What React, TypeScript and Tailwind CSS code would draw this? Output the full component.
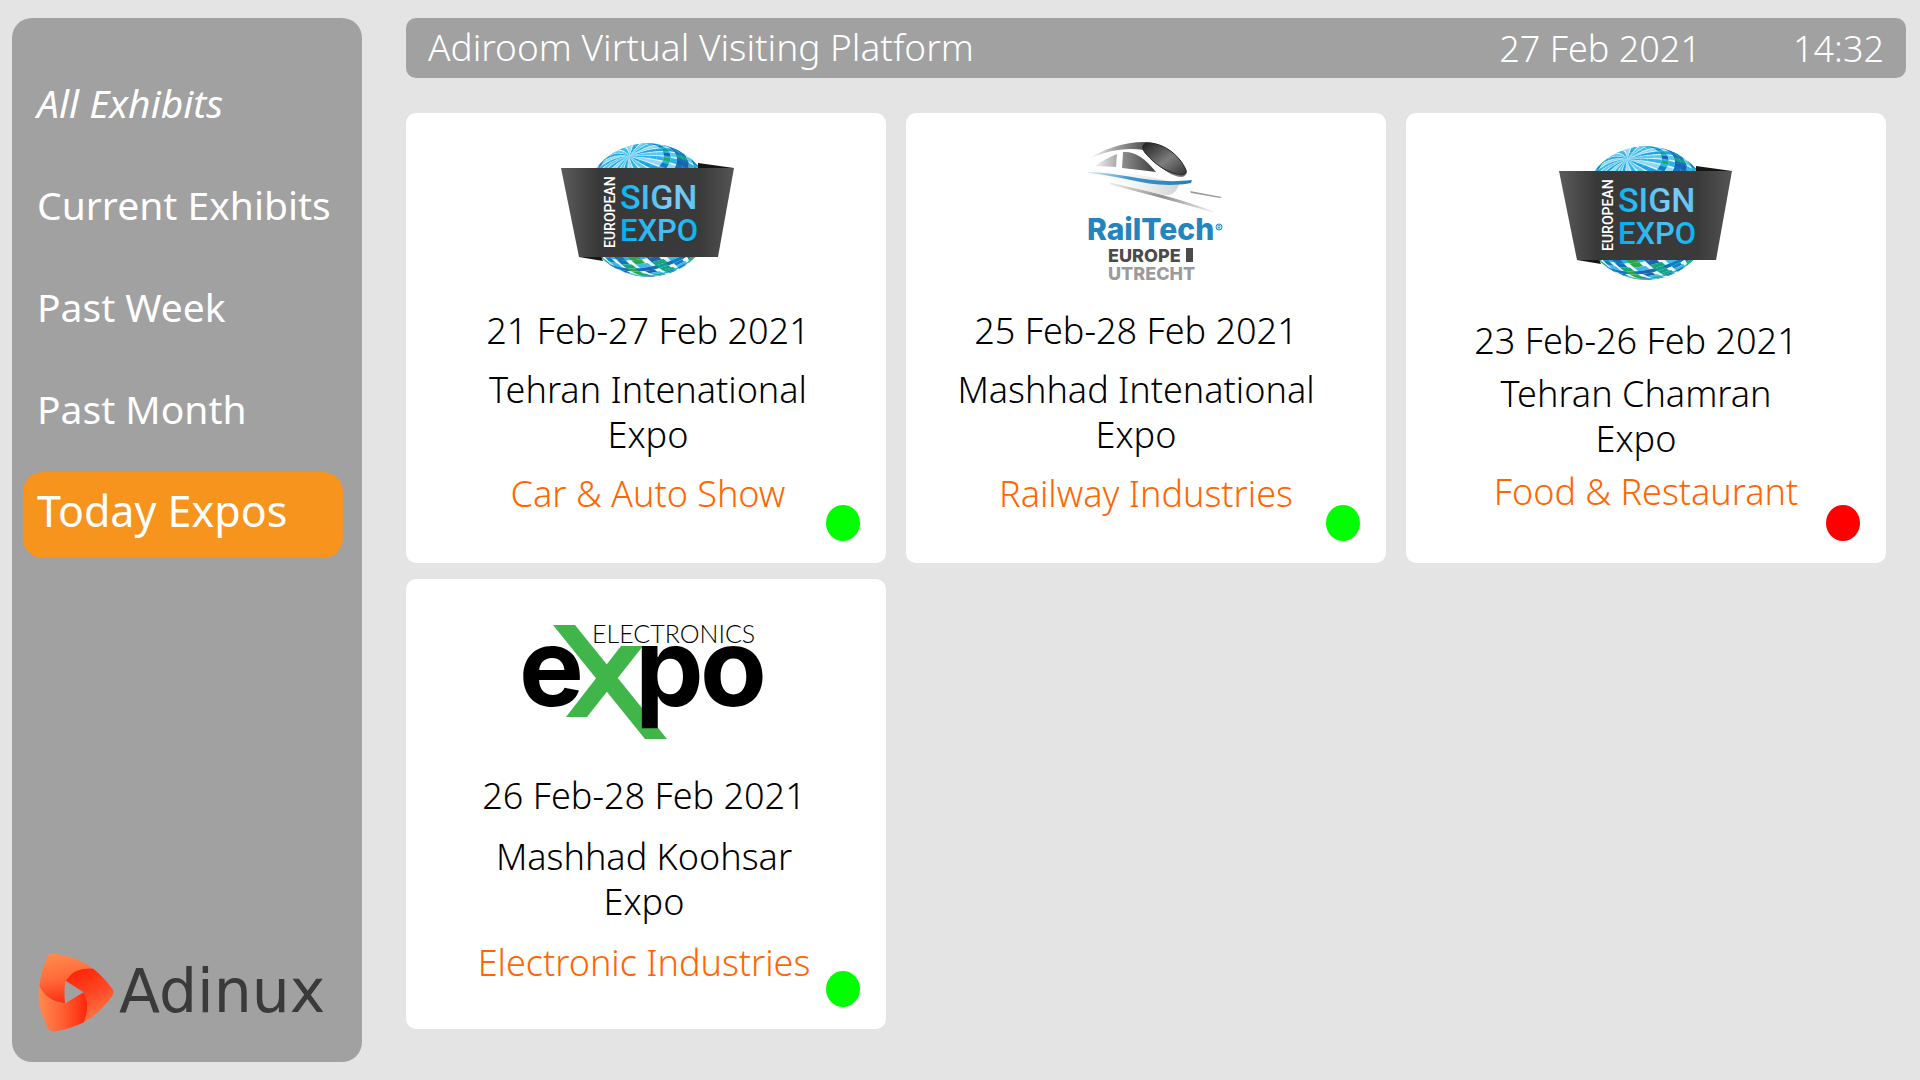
import React from 'react';

const GLOBE = { cx: 107, cy: 80, r: 67 };

type Cell = { d: string; fill: string };

/** Projects a woven latitude/longitude grid of a tilted sphere into flat cells. */
function buildGlobe(): Cell[] {
  const pole = [-0.28, 0.8, 0.53];
  const len = Math.hypot(pole[0], pole[1], pole[2]);
  const p = pole.map((v) => v / len);
  const uLen = Math.hypot(p[2], p[0]);
  const u = [p[2] / uLen, 0, -p[0] / uLen];
  const v = [p[1] * u[2] - p[2] * u[1], p[2] * u[0] - p[0] * u[2], p[0] * u[1] - p[1] * u[0]];
  const at = (theta: number, phi: number) => {
    const a = phi + theta * 0.35;
    const s = Math.sin(theta);
    return [0, 1, 2].map((i) => p[i] * Math.cos(theta) + u[i] * s * Math.cos(a) + v[i] * s * Math.sin(a));
  };
  const lons = 48;
  const lats = 30;
  const blues = ['#29b5ea', '#5cc8f0', '#19a3e0', '#8fd6f2'];
  const bands = ['#1272bd', '#2ba84a', '#1c62b0', '#14a08a', '#0f7fc4'];
  const cells: Cell[] = [];
  for (let i = 0; i < lats; i++) {
    for (let j = 0; j < lons; j++) {
      const lonStrip = j % 2 === 0;
      const latStrip = i % 3 !== 0 && i > 4;
      if (!lonStrip && !latStrip) continue;
      const widen = lonStrip ? 0.25 : 0;
      const t0 = (i / lats) * Math.PI;
      const t1 = ((i + 1) / lats) * Math.PI;
      const f0 = ((j - widen) / lons) * Math.PI * 2;
      const f1 = ((j + 1 + widen) / lons) * Math.PI * 2;
      const corners = [at(t0, f0), at(t0, f1), at(t1, f1), at(t1, f0)];
      if (corners.some((c) => c[2] < -0.08)) continue;
      const row = Math.floor(i / 3);
      const low = i > 15;
      let fill = blues[(j >> 1) % 4];
      if (lonStrip && latStrip) fill = bands[(row + (j >> 1)) % 5];
      else if (latStrip) fill = low && i % 3 === 2 ? '#e9f7fd' : row % 2 ? '#29b5ea' : '#1272bd';
      else if (low) fill = (j >> 1) % 2 ? '#14a67c' : '#3cb9e8';
      const pts = corners.map((c) => `${(GLOBE.cx + c[0] * GLOBE.r).toFixed(1)} ${(GLOBE.cy - c[1] * GLOBE.r).toFixed(1)}`);
      cells.push({ d: `M${pts.join('L')}Z`, fill });
    }
  }
  return cells;
}

const globeCells = buildGlobe();

function SignExpoLogo({ id }: { id: string }) {
  return (
    <svg viewBox="-3 0 220 160" className="h-[160px] w-[220px]" role="img" aria-label="European Sign Expo">
      <defs>
        <clipPath id={`${id}-clip`}>
          <circle cx={GLOBE.cx} cy={GLOBE.cy} r={GLOBE.r} />
        </clipPath>
        <linearGradient id={`${id}-band`} x1="0" x2="1" y1="0" y2="0">
          <stop offset="0" stopColor="#5c5c5c" />
          <stop offset="0.12" stopColor="#484848" />
          <stop offset="0.22" stopColor="#383838" />
          <stop offset="0.8" stopColor="#3a3a3a" />
          <stop offset="1" stopColor="#545454" />
        </linearGradient>
        <linearGradient id={`${id}-sign`} x1="0" x2="1" y1="0" y2="0">
          <stop offset="0" stopColor="#00b4f1" />
          <stop offset="0.65" stopColor="#7fcdf7" />
          <stop offset="1" stopColor="#5cc3f5" />
        </linearGradient>
        <linearGradient id={`${id}-expo`} x1="0" x2="1" y1="0" y2="0">
          <stop offset="0" stopColor="#00aeef" />
          <stop offset="0.6" stopColor="#4cc0f5" />
          <stop offset="1" stopColor="#00b4f1" />
        </linearGradient>
      </defs>
      <g clipPath={`url(#${id}-clip)`}>
        <circle cx={GLOBE.cx} cy={GLOBE.cy} r={GLOBE.r} fill="#e2f5fd" />
        {globeCells.map((c, i) => (
          <path key={i} d={c.d} fill={c.fill} />
        ))}
      </g>
      <path d="M157 33L193 38H157Z M38 127L62 131L60 126Z" fill="#161616" />
      <path d="M20 38H193L177 127H38Z" fill={`url(#${id}-band)`} />
      <text transform="translate(74 118) rotate(-90)" fontFamily="Roboto, sans-serif" fontSize="14" fontWeight="500" fill="#fff">
        EUROPEAN
      </text>
      <text x="79" y="79" fontFamily="Roboto, sans-serif" fontSize="34" fontWeight="500" fill={`url(#${id}-sign)`}>
        SIGN
      </text>
      <text x="79" y="111" fontFamily="Roboto, sans-serif" fontSize="31" fontWeight="500" fill={`url(#${id}-expo)`}>
        EXPO
      </text>
    </svg>
  );
}

function RailTechLogo() {
  return (
    <svg viewBox="-9 0 190 160" className="h-[160px] w-[190px]" role="img" aria-label="RailTech Europe Utrecht">
      <defs>
        <linearGradient id="rt-roof" x1="0" x2="1" y1="0" y2="0">
          <stop offset="0" stopColor="#ffffff" />
          <stop offset="0.3" stopColor="#9a9a9a" />
          <stop offset="0.6" stopColor="#4a4a4a" />
          <stop offset="1" stopColor="#8a8a8a" />
        </linearGradient>
        <linearGradient id="rt-body" x1="0" x2="1" y1="0" y2="0">
          <stop offset="0" stopColor="#ffffff" />
          <stop offset="0.5" stopColor="#f7f7f7" />
          <stop offset="1" stopColor="#d4d4d4" />
        </linearGradient>
        <linearGradient id="rt-glass" x1="0" x2="1" y1="0" y2="1">
          <stop offset="0" stopColor="#1e1e1e" />
          <stop offset="0.55" stopColor="#7d7d7d" />
          <stop offset="1" stopColor="#333333" />
        </linearGradient>
        <linearGradient id="rt-window" x1="0" x2="1" y1="0" y2="0">
          <stop offset="0" stopColor="#8f8f8f" />
          <stop offset="1" stopColor="#3c3c3c" />
        </linearGradient>
        <linearGradient id="rt-window-far" x1="0" x2="1" y1="0" y2="0">
          <stop offset="0" stopColor="#f4f4f4" />
          <stop offset="1" stopColor="#a9a9a9" />
        </linearGradient>
        <linearGradient id="rt-line" x1="0" x2="1" y1="0" y2="0">
          <stop offset="0" stopColor="#d9ecf7" />
          <stop offset="0.4" stopColor="#3d94cb" />
          <stop offset="1" stopColor="#1f82c0" />
        </linearGradient>
        <linearGradient id="rt-rail" x1="0" x2="1" y1="0" y2="0">
          <stop offset="0" stopColor="#eeeeee" />
          <stop offset="0.5" stopColor="#8c8c8c" />
          <stop offset="1" stopColor="#eeeeee" />
        </linearGradient>
      </defs>
      <path d="M28 42C60 41 90 46 119 54C117 62 112 66 104 65C80 61 55 51 28 42Z" fill="url(#rt-body)" />
      <path d="M28 29C44 19 64 12 84 12C102 12 120 24 127 42C126 47 122 48 116 46C104 42 92 30 84 20C66 17 48 20 28 29Z" fill="url(#rt-roof)" />
      <path d="M86 13C102 12 119 24 126 40C127 45 122 46 117 44C104 41 94 33 87 25C82 20 81 15 86 13Z" fill="url(#rt-glass)" stroke="#2a2a2a" />
      <path d="M63 22C74 21 84 27 96 42C86 41 74 39 62 38Z" fill="url(#rt-window)" />
      <path d="M57 24L56 37L35 36C42 31 49 27 57 24Z" fill="url(#rt-window-far)" />
      <path d="M28 42C62 42 90 55 132 50L131 53C92 60 66 46 28 43Z" fill="url(#rt-line)" />
      <path d="M50 53C84 61 118 68 153 82C116 71 84 63 50 54Z" fill="url(#rt-rail)" stroke="url(#rt-rail)" />
      <path d="M130 61L162 67L160 68L131 63Z" fill="#9b9b9b" />
      <text x="27" y="110" fontFamily="Inter, sans-serif" fontSize="30" fontWeight="800" fill="#2484bd">
        RailTech
      </text>
      <circle cx="159" cy="97" r="3" fill="none" stroke="#2484bd" />
      <text x="159" y="99" textAnchor="middle" fontFamily="Inter, sans-serif" fontSize="5" fontWeight="600" fill="#2484bd">
        R
      </text>
      <text x="48" y="132" fontFamily="Inter, sans-serif" fontSize="18" fontWeight="800" fill="#4b4b4d">
        EUROPE
      </text>
      <rect x="126" y="118" width="7" height="14" fill="#4b4b4d" />
      <text x="48" y="150" fontFamily="Inter, sans-serif" fontSize="18" fontWeight="800" fill="#9b9b9b">
        UTRECHT
      </text>
    </svg>
  );
}

function ElectronicsExpoLogo() {
  return (
    <svg viewBox="-1 -20 270 180" className="h-[180px] w-[270px]" role="img" aria-label="Electronics Expo">
      <text x="9" y="96" fontFamily="Inter, sans-serif" fontSize="109" fontWeight="700" fill="#000">
        e
      </text>
      <path d="M43 15H65L157 129H135Z" fill="#40b54a" />
      <path d="M111 36H133L77 107H56Z" fill="#40b54a" />
      <text x="125" y="96" fontFamily="Inter, sans-serif" fontSize="109" fontWeight="700" fill="#000">
        p
      </text>
      <text x="190" y="96" fontFamily="Inter, sans-serif" fontSize="109" fontWeight="700" fill="#000">
        o
      </text>
      <text x="82" y="33" fontFamily="Lato, sans-serif" fontSize="25" fontWeight="300" fill="#000">
        ELECTRONICS
      </text>
    </svg>
  );
}

function AdinuxLogo() {
  return (
    <svg viewBox="0 0 340 110" className="h-[110px] w-[340px]" role="img" aria-label="Adinux">
      <defs>
        <linearGradient id="ax-top" x1="0.3" x2="0.5" y1="0" y2="1">
          <stop offset="0" stopColor="#ff8a4f" />
          <stop offset="0.5" stopColor="#ff6a38" />
          <stop offset="1" stopColor="#ff2a10" />
        </linearGradient>
        <linearGradient id="ax-right" x1="0.2" x2="0.6" y1="0" y2="1">
          <stop offset="0" stopColor="#ff2206" />
          <stop offset="0.5" stopColor="#ff4524" />
          <stop offset="1" stopColor="#ff7c46" />
        </linearGradient>
        <linearGradient id="ax-bottom" x1="0" x2="1" y1="0" y2="0">
          <stop offset="0" stopColor="#ff8a4f" />
          <stop offset="0.5" stopColor="#ff5f33" />
          <stop offset="1" stopColor="#ff2508" />
        </linearGradient>
      </defs>
      <g transform="scale(0.3333)">
        <path d="M58 138Q65 85 83 48Q88 38 106 41Q170 50 220 86Q165 85 137 122Q131 150 135 190Q80 184 58 138Z" fill="url(#ax-top)" />
        <path d="M137 122Q165 80 220 86Q255 115 278 148Q284 157 277 167Q240 220 192 247Q210 200 190 157Z" fill="url(#ax-right)" />
        <path d="M58 138Q80 186 135 190L190 157Q212 195 192 247Q150 268 105 274Q90 276 84 264Q48 200 58 138Z" fill="url(#ax-bottom)" />
        <path d="M135 125L190 157L135 190Z" fill="#a1a1a1" />
      </g>
      <text x="99" y="72" fontFamily="'DejaVu Sans', sans-serif" fontSize="60" fill="#3a3a3a">
        Adinux
      </text>
    </svg>
  );
}

const navItems = [
  { label: 'All Exhibits', className: 'text-[39px] italic' },
  { label: 'Current Exhibits', className: 'text-[39px]' },
  { label: 'Past Week', className: 'text-[39px]' },
  { label: 'Past Month', className: 'text-[39px]' },
  { label: 'Today Expos', className: 'bg-[#f7941d] text-[43px]' },
];

const expos = [
  {
    logo: <SignExpoLogo id="sign-a" />,
    logoClass: 'h-[195px] pt-[17px]',
    cardClass: 'pl-1',
    headClass: '',
    gapClass: 'gap-[14px]',
    dates: '21 Feb-27 Feb 2021',
    venue: 'Tehran Intenational',
    topic: 'Car & Auto Show',
    dot: 'bg-[#00ff00]',
    status: 'Open',
  },
  {
    logo: <RailTechLogo />,
    logoClass: 'h-[195px] pt-[17px]',
    cardClass: '',
    headClass: 'pr-5',
    gapClass: 'gap-[14px]',
    dates: '25 Feb-28 Feb 2021',
    venue: 'Mashhad Intenational',
    topic: 'Railway Industries',
    dot: 'bg-[#00ff00]',
    status: 'Open',
  },
  {
    logo: <SignExpoLogo id="sign-b" />,
    logoClass: 'h-[205px] pt-5',
    cardClass: '',
    headClass: 'pr-5',
    gapClass: 'gap-2',
    dates: '23 Feb-26 Feb 2021',
    venue: 'Tehran Chamran',
    topic: 'Food & Restaurant',
    dot: 'bg-[#ff0000]',
    status: 'Closed',
  },
  {
    logo: <ElectronicsExpoLogo />,
    logoClass: 'h-[194px] pt-[11px]',
    cardClass: 'pr-1',
    headClass: '',
    gapClass: 'gap-4',
    dates: '26 Feb-28 Feb 2021',
    venue: 'Mashhad Koohsar',
    topic: 'Electronic Industries',
    dot: 'bg-[#00ff00]',
    status: 'Open',
  },
];

export default function App() {
  return (
    <div className="flex min-h-screen gap-11 bg-[#e4e4e4] py-[18px] pr-[14px] pl-3 font-['Noto_Sans',sans-serif]">
      <aside className="flex w-[350px] shrink-0 flex-col rounded-[20px] bg-[#a1a1a1] pt-[46px] pb-3">
        <nav className="flex flex-col gap-4 pr-[19px] pl-[11px]">
          {navItems.map((item) => (
            <button
              key={item.label}
              type="button"
              className={`flex h-[86px] items-center rounded-[20px] pb-2 pl-[14px] text-left whitespace-nowrap text-white ${item.className}`}
            >
              {item.label}
            </button>
          ))}
        </nav>
        <div className="mt-auto pl-2">
          <AdinuxLogo />
        </div>
      </aside>

      <main className="flex min-w-0 flex-1 flex-col gap-[35px]">
        <header className="flex h-[60px] items-center rounded-[10px] bg-[#a1a1a1] px-[22px] leading-[45px] font-light text-white">
          <h1 className="pb-1 text-[37px]">Adiroom Virtual Visiting Platform</h1>
          <time className="ml-auto text-[36px]">27 Feb 2021</time>
          <time className="ml-[92px] text-[36px]">14:32</time>
        </header>

        <section className="mr-5 grid grid-cols-3 gap-x-5 gap-y-4">
          {expos.map((expo) => (
            <article
              key={expo.dates}
              className={`relative flex min-h-[450px] flex-col rounded-[10px] bg-white text-center text-[36px] leading-[45px] font-light text-black ${expo.cardClass}`}
            >
              <div className={`flex items-start justify-center ${expo.logoClass}`}>{expo.logo}</div>
              <div className={`flex flex-col ${expo.gapClass}`}>
                <p className={expo.headClass}>{expo.dates}</p>
                <h2 className={expo.headClass}>
                  {expo.venue}
                  <br />
                  Expo
                </h2>
                <p className="text-[#ff6600]">{expo.topic}</p>
              </div>
              <span role="img" aria-label={expo.status} className={`absolute right-[26px] bottom-[22px] h-9 w-[34px] rounded-[50%] ${expo.dot}`} />
            </article>
          ))}
        </section>
      </main>
    </div>
  );
}
